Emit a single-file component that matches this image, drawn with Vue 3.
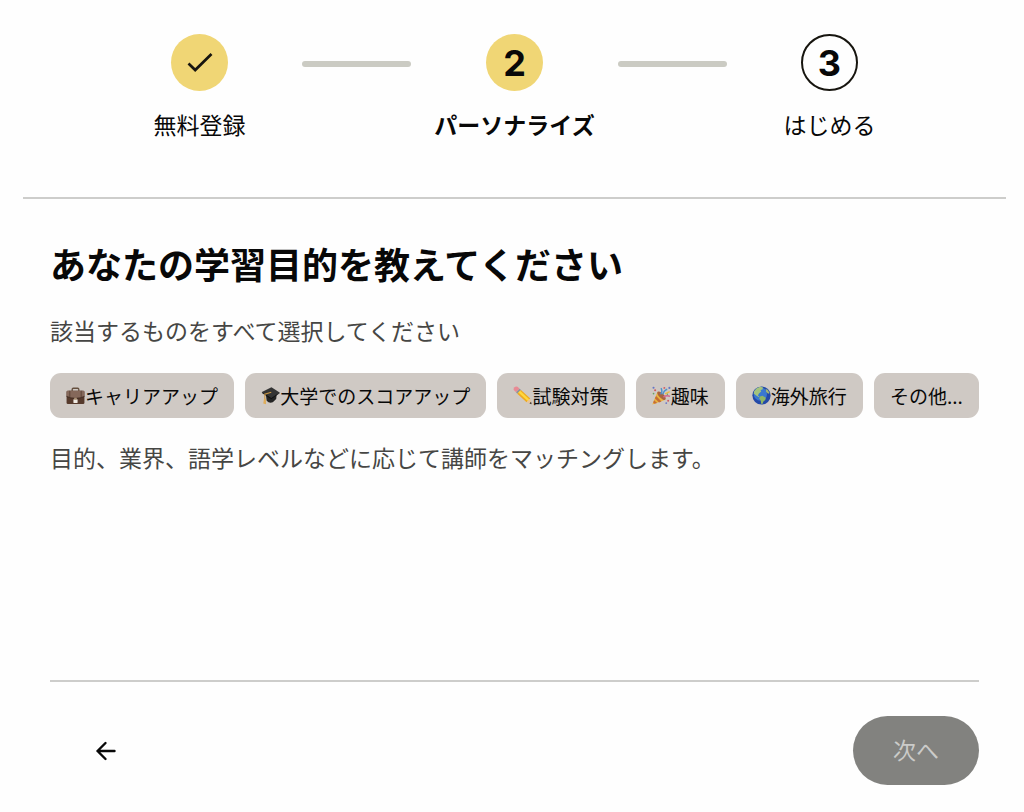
<script setup>
const steps = [
  { id: 1, label: '無料登録', state: 'done' },
  { id: 2, label: 'パーソナライズ', state: 'current' },
  { id: 3, label: 'はじめる', state: 'todo' },
]
const goals = [
  { icon: 'briefcase', label: 'キャリアアップ' },
  { icon: 'cap', label: '大学でのスコアアップ' },
  { icon: 'pencil', label: '試験対策' },
  { icon: 'party', label: '趣味' },
  { icon: 'globe', label: '海外旅行' },
  { icon: null, label: 'その他...' },
]
</script>

<template>
  <div class="page">
    <header class="header">
      <ol class="steps">
        <template v-for="(step, i) in steps" :key="step.id">
          <li v-if="i > 0" class="connector" aria-hidden="true"></li>
          <li class="step" :class="step.state">
            <span class="badge">
              <svg v-if="step.state === 'done'" width="28" height="28" viewBox="0 0 28 28" fill="none" stroke="#17150f" stroke-width="2.7">
                <path d="M2.5 14.5 9.2 21 25.5 5" />
              </svg>
              <template v-else>{{ step.id }}</template>
            </span>
            <span class="label">{{ step.label }}</span>
          </li>
        </template>
      </ol>
    </header>

    <main class="content">
      <h1>あなたの学習目的を教えてください</h1>
      <p>該当するものをすべて選択してください</p>
      <div class="goals">
        <button v-for="goal in goals" :key="goal.label" type="button" class="goal">
          <svg v-if="goal.icon === 'briefcase'" class="icon" viewBox="0 0 20 20">
            <path d="M6.5 6V3.6Q6.5 2.4 7.7 2.4h4.6q1.2 0 1.2 1.2V6" fill="none" stroke="#66503f" stroke-width="1.4" />
            <rect x=".6" y="5" width="18.8" height="14" rx="1.4" fill="#563a2c" />
            <path d="M.6 6.4Q.6 5 2 5h16q1.4 0 1.4 1.4V11q-4.4 2-9.4 2T.6 11z" fill="#85685a" />
            <path d="M.6 11q4.4 2 9.4 2t9.4-2" fill="none" stroke="#332018" stroke-width=".8" />
            <path d="M4 5v7M16 5v7" stroke="#5c4437" stroke-width="1" />
            <rect x="7.8" y="14" width="4.4" height="4" rx=".6" fill="#f0eae2" />
            <rect x="8.6" y="12.4" width="2.8" height="2" fill="#a99073" />
          </svg>
          <svg v-else-if="goal.icon === 'cap'" class="icon" viewBox="0 0 20 20">
            <path d="m5 8 1 7.6q2.6 3 6.4 1.6l3.6-3.4.6-6z" fill="#242424" />
            <path d="M1 6.3 11 1.2l8.6 5.6-8.8 6.6z" fill="#343434" />
            <path d="m1 6.3 9.8 6.2 8.8-5.7v.9l-8.8 6.2L1 7.4z" fill="#111" />
            <path d="M10.8 6.6 4 8.6v6" fill="none" stroke="#c99643" stroke-width="1.1" />
            <path d="m3.2 13.5-.8 5 2.9.7-.2-5.7z" fill="#dfad59" />
          </svg>
          <svg v-else-if="goal.icon === 'pencil'" class="icon" viewBox="0 0 20 20">
            <path d="M.8 4.1Q.2 2.6 1.6 1.2T4.8.9l2.2 2-3.8 3.8z" fill="#e88a94" />
            <path d="M3.2 6.7 7 2.9l1.4 1.2-3.9 4z" fill="#8c939b" />
            <path d="m4.5 8.1 3.9-4 9.8 9-3.9 4z" fill="#efaa20" />
            <path d="m5.7 6.9 1.8-1.8 9.8 9-1.8 1.8z" fill="#ffd83d" />
            <path d="m14.3 17.1 3.9-4 1.4 6z" fill="#e8c49a" />
            <path d="m17.4 18.3 1.6-1.6.6 2.4z" fill="#302b28" />
          </svg>
          <svg v-else-if="goal.icon === 'party'" class="icon" viewBox="0 0 20 20">
            <path d="m.4 19.4 5.3-13 8.4 8.2z" fill="#eab33d" />
            <path d="m4.4 10.4 5.6 6-2.6 1-4.4-4.4zM2.2 15 5.4 18l-2.8.8-1.4-1.4z" fill="#c56d37" />
            <ellipse cx="10" cy="10.2" rx="2.5" ry="5.8" transform="rotate(-45 10 10.2)" fill="#a86440" />
            <path d="M9 8.6Q11.5 6 9.5 2.2M11.6 9Q12 4.8 16 3.4" fill="none" stroke="#4d91cd" stroke-width="1.5" />
            <path d="M12 11.7q3.2-2.2 7-.8" fill="none" stroke="#d3668d" stroke-width="1.5" />
            <path d="M13.8 8.2 18.6 6" stroke="#edba42" stroke-width="1.4" />
            <g fill="#cf5962"><circle cx="3.3" cy="4.5" r="1.1" /><circle cx="13" cy="2" r="1" /><circle cx="17" cy="15.6" r="1" /></g>
            <g fill="#6576c6"><circle cx="1.6" cy="1.8" r="1.1" /><circle cx="18.3" cy="2" r="1.1" /><circle cx="15" cy="18" r="1" /></g>
            <g fill="#69a560"><circle cx="1.6" cy="8" r=".9" /><circle cx="16.2" cy="8.8" r=".8" /></g>
          </svg>
          <svg v-else-if="goal.icon === 'globe'" class="icon" viewBox="0 0 20 20">
            <circle cx="10" cy="10" r="9.6" fill="#2349a8" />
            <circle cx="8.8" cy="8.4" r="7" fill="#3a78d0" />
            <path d="M2.2 5.6Q4.5 1.8 8.6.9l3 .8-.6 2-2 .4.7 1.8-2.4 2-1.1 2 1.8 1.4-1 .4-2.6-1.7L1.8 7.8z" fill="#a5c47c" />
            <path d="m8.4 11 2.6-.7 3.6 2.1-.6 2.4-2 1.4-1 2.8-1.4-.4-.5-3.5-1.6-2z" fill="#8fb565" />
            <path d="m14.4 3.2 2 .7 2.2 3.5-1.5.7-2.2-1.7z" fill="#a1b675" />
          </svg>
          <span>{{ goal.label }}</span>
        </button>
      </div>
      <p>目的、業界、語学レベルなどに応じて講師をマッチングします。</p>
    </main>

    <footer class="footer">
      <button type="button" class="back" aria-label="戻る">
        <svg width="24" height="24" viewBox="0 0 24 24" fill="none" stroke="#080808" stroke-width="2.4" stroke-linecap="round" stroke-linejoin="round">
          <path d="M20.5 12H3.5M11.5 4 3.5 12l8 8" />
        </svg>
      </button>
      <button type="button" class="next" disabled>次へ</button>
    </footer>
  </div>
</template>

<style>
body {
  margin: 0;
  background: #fefefe;
}
</style>

<style scoped>
.page {
  box-sizing: border-box;
  min-height: 100vh;
  display: flex;
  flex-direction: column;
  padding: 0 18px 27px 23px;
  color: #080808;
  font-family: "Noto Sans CJK JP", sans-serif;
}
.header {
  padding: 34px 0 57px;
  border-bottom: 2px solid #cdcdcb;
}
.steps {
  display: grid;
  grid-template-columns: repeat(5, 1fr);
  width: 80%;
  margin: 0 auto;
  padding: 0;
  list-style: none;
}
.step {
  display: flex;
  flex-direction: column;
  align-items: center;
  gap: 17px;
}
.badge {
  box-sizing: border-box;
  display: flex;
  align-items: center;
  justify-content: center;
  width: 57px;
  height: 57px;
  border-radius: 50%;
  background: #f0d675;
  font: 700 36px/1 Inter, sans-serif;
}
.todo .badge {
  background: transparent;
  border: 2px solid #17150f;
}
.label {
  font-size: 23px;
  line-height: 32px;
  white-space: nowrap;
}
.current .label {
  font-weight: 700;
}
.connector {
  width: 109px;
  height: 6px;
  margin-top: 27px;
  justify-self: center;
  border-radius: 3px;
  background: #cbcbc3;
}
.content {
  flex: 1;
  padding: 38px 27px 0;
}
h1 {
  margin: 0;
  font-size: 36px;
  line-height: 52px;
}
p {
  margin: 0;
  color: #464644;
  font-size: 23px;
  line-height: 32px;
}
h1 + p {
  margin-top: 25px;
}
.goals {
  display: flex;
  flex-wrap: wrap;
  gap: 11px;
  margin: 27px 0 23px;
}
button {
  border: 0;
  font-family: inherit;
}
.goal {
  display: flex;
  align-items: center;
  justify-content: center;
  flex: 1 1 auto;
  height: 45px;
  padding: 0 15px;
  border-radius: 11px;
  background: #cfc9c4;
  color: #080808;
  font-size: 19px;
  line-height: 28px;
  white-space: nowrap;
}
.icon {
  width: 19px;
  height: 19px;
  flex: none;
}
.footer {
  display: flex;
  align-items: center;
  justify-content: space-between;
  margin: 0 27px;
  padding-top: 34px;
  border-top: 2px solid #cdcdcb;
}
.back {
  display: flex;
  padding: 12px;
  margin-left: 32px;
  background: transparent;
}
.next {
  height: 69px;
  padding: 0 40px 4px;
  border-radius: 35px;
  background: #82827f;
  color: #cbcbc9;
  font-size: 23px;
}
</style>
